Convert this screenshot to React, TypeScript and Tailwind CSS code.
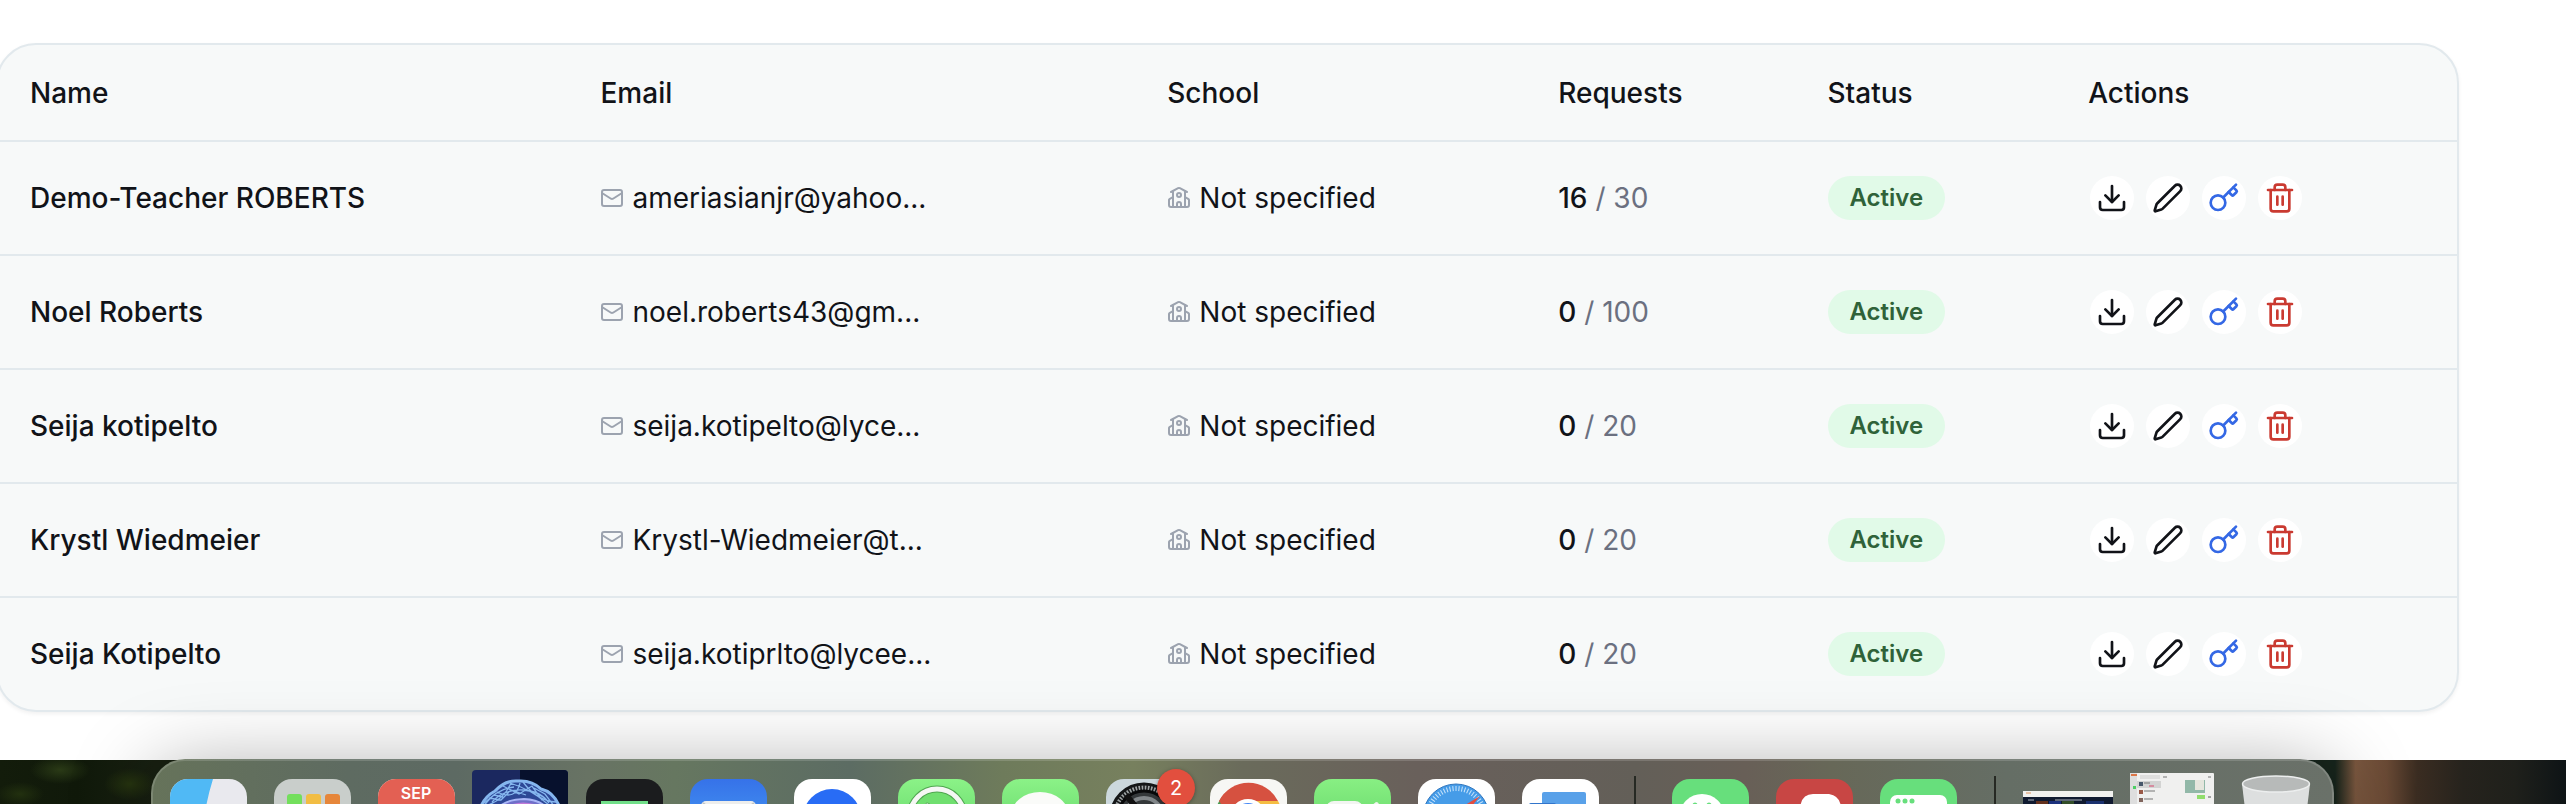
import React from "react";
import { Download, Key, Mail, Pen, School, Trash2 } from "lucide-react";

type Teacher = { name: string; email: string; used: number; limit: number };

const teachers: Teacher[] = [
  { name: "Demo-Teacher ROBERTS", email: "ameriasianjr@yahoo...", used: 16, limit: 30 },
  { name: "Noel Roberts", email: "noel.roberts43@gm...", used: 0, limit: 100 },
  { name: "Seija kotipelto", email: "seija.kotipelto@lyce...", used: 0, limit: 20 },
  { name: "Krystl Wiedmeier", email: "Krystl-Wiedmeier@t...", used: 0, limit: 20 },
  { name: "Seija Kotipelto", email: "seija.kotiprlto@lycee...", used: 0, limit: 20 },
];

const columns = ["Name", "Email", "School", "Requests", "Status", "Actions"];

function ActionButton({ label, className, children }: { label: string; className: string; children: React.ReactNode }) {
  return (
    <button type="button" aria-label={label} className={`flex size-11 items-center justify-center rounded-full bg-white ${className}`}>
      {children}
    </button>
  );
}

function TeacherRow({ teacher }: { teacher: Teacher }) {
  return (
    <tr className="h-[114px] border-b-2 border-[#e2e9ed] last:h-[113px] last:border-0">
      <td className="px-8 font-medium">{teacher.name}</td>
      <td className="px-8">
        <div className="flex items-center gap-2">
          <Mail className="size-6 text-[#9ca3af]" />
          <span>{teacher.email}</span>
        </div>
      </td>
      <td className="px-8">
        <div className="flex items-center gap-2">
          <School className="size-6 text-[#9ca3af]" />
          <span>Not specified</span>
        </div>
      </td>
      <td className="px-8">
        <span className="font-medium">{teacher.used}</span>
        <span className="text-[#6b7080]"> / {teacher.limit}</span>
      </td>
      <td className="px-8">
        <div className="flex">
          <span className="rounded-full border-2 border-transparent bg-[#e1fae8] px-5 py-1 text-2xl leading-8 font-semibold text-[#2f6239]">
            Active
          </span>
        </div>
      </td>
      <td className="px-8">
        <div className="flex gap-3 pl-[2px]">
          <ActionButton label={`Download ${teacher.name}`} className="text-[#111318]">
            <Download className="size-8" />
          </ActionButton>
          <ActionButton label={`Edit ${teacher.name}`} className="text-[#111318]">
            <Pen className="size-8" />
          </ActionButton>
          <ActionButton label={`Reset password of ${teacher.name}`} className="text-[#3468e5]">
            <Key className="size-8" />
          </ActionButton>
          <ActionButton label={`Delete ${teacher.name}`} className="text-[#ca3a31]">
            <Trash2 className="size-8" />
          </ActionButton>
        </div>
      </td>
    </tr>
  );
}

function Tile({ className, children }: { className: string; children?: React.ReactNode }) {
  return (
    <div className="flex w-[104px] shrink-0 justify-center pt-[18px]">
      <div className={`size-[77px] overflow-hidden rounded-[18px] ${className}`}>{children}</div>
    </div>
  );
}

function Art({ children }: { children: React.ReactNode }) {
  return (
    <svg viewBox="0 0 77 77" className="size-full" aria-hidden="true">
      {children}
    </svg>
  );
}

const ticks = Array.from({ length: 60 }, (_, i) => i * 6);

function Dock() {
  return (
    <nav
      aria-label="Dock"
      className="relative -mt-px ml-[151px] flex h-[120px] w-[2183px] shrink-0 rounded-[34px] border-2 border-white/15 bg-[linear-gradient(90deg,#66735a_0%,#5e6b61_9%,#5d6a63_14%,#687364_20%,#667760_24%,#5c6c63_32%,#6e7b5b_39%,#77805e_45%,#6a6b5b_50%,#69605b_58%,#635f58_68%,#685f57_73%,#676858_77%,#656e65_85%,#6a7169_100%)] bg-origin-border pl-[3px] shadow-[0_10px_80px_rgba(0,0,0,0.34)]"
    >
      <Tile className="bg-[#e9e9ee]">
        <Art>
          <path d="M0 0H43Q35 26 34 44H43V77H0Z" fill="#50b9f5" />
          <path d="M20 27v8M57 27v8" stroke="#20252b" strokeWidth="4" strokeLinecap="round" />
        </Art>
      </Tile>
      <Tile className="bg-[#c9cecb]">
        <Art>
          <rect x="13" y="15" width="15" height="15" rx="3" fill="#73df5c" />
          <rect x="32" y="15" width="15" height="15" rx="3" fill="#f2bd43" />
          <rect x="51" y="15" width="15" height="15" rx="3" fill="#e6863a" />
        </Art>
      </Tile>
      <Tile className="bg-[#f3f1ee]">
        <div className="h-[27px] bg-[#e36053] pt-1 text-center text-base leading-5 font-semibold text-white">SEP</div>
      </Tile>
      <div className="flex w-[104px] shrink-0 justify-center pt-[9px]">
        <svg viewBox="0 0 96 96" className="size-24 rounded-[4px]" aria-hidden="true">
          <rect width="96" height="96" fill="#1b285f" />
          <rect x="48" width="48" height="96" fill="#07112d" />
          <path d="M6 45Q8 29 21 22Q29 11 43 10Q56 9 66 17Q81 20 85 32Q93 38 91 60H5Z" fill="#2d4796" />
          <g fill="none" stroke="#85b6ee">
            <path d="M7 43Q10 28 23 21Q33 10 46 11Q60 10 69 19Q82 22 88 38" strokeWidth="3" />
            <path d="M10 39Q22 19 42 17M13 36Q31 31 39 13M25 22Q44 31 48 13M38 13Q61 20 79 37M51 12Q65 31 84 32M20 32Q32 19 51 20Q69 21 77 33M31 16L47 24L60 16L70 30M17 28L29 30L39 20L54 25M12 33L22 25L31 27M62 18L73 24L82 36" strokeWidth="1.3" />
          </g>
          <path d="M22 42Q32 29 52 29Q72 30 78 43Z" fill="#6f6fc9" stroke="#a9b6f7" strokeWidth="2" />
          <path d="M36 36Q48 30 62 34L66 40H34Z" fill="#c07ad8" />
        </svg>
      </div>
      <Tile className="bg-[#1b1c1e]">
        <Art>
          <rect x="15" y="22" width="47" height="30" fill="#71df89" />
        </Art>
      </Tile>
      <Tile className="bg-[linear-gradient(#3672e9,#4aa7f4)]">
        <Art>
          <rect x="11" y="22" width="55" height="36" rx="5" fill="#eeeeec" />
          <path d="M13 24L38 45L64 24" fill="none" stroke="#bfc4c6" strokeWidth="2" />
        </Art>
      </Tile>
      <Tile className="bg-white">
        <Art>
          <circle cx="38" cy="39" r="29" fill="#286cf5" />
        </Art>
      </Tile>
      <Tile className="bg-[linear-gradient(#8bf287,#58cf60)]">
        <Art>
          <circle cx="39" cy="37" r="27" fill="#70df6f" stroke="#50a650" strokeWidth="7" />
          <circle cx="39" cy="37" r="27" fill="none" stroke="#f5f7f4" strokeWidth="5" />
          <path d="M26 28Q27 22 32 25L34 32" fill="#fff" stroke="#58aa58" />
        </Art>
      </Tile>
      <Tile className="bg-[linear-gradient(#8bf287,#58cf60)]">
        <Art>
          <ellipse cx="38" cy="37" rx="29" ry="24" fill="#fafbf9" />
        </Art>
      </Tile>
      <div className="relative w-[104px] shrink-0 pt-[18px]">
        <div className="mx-auto size-[77px] overflow-hidden rounded-[18px] bg-[#ccd8dd]">
          <Art>
            <circle cx="38" cy="38" r="33" fill="#a1a6a7" stroke="#141617" strokeWidth="3" />
            <g stroke="#17191a" strokeWidth="1.5">
              {ticks.map((a) => (
                <path key={a} d="M38 6V12" transform={`rotate(${a} 38 38)`} />
              ))}
            </g>
            <circle cx="38" cy="38" r="26" fill="#34383a" stroke="#08090a" strokeWidth="3" />
            <circle cx="38" cy="38" r="19" fill="none" stroke="#82878a" strokeWidth="4" />
            <path d="M38 38L20 16M38 38L65 27" stroke="#111" strokeWidth="6" />
          </Art>
        </div>
        <span className="absolute top-[8px] left-[65px] flex size-[38px] items-center justify-center rounded-full bg-[#e24f3e] text-xl text-white shadow-[0_1px_4px_rgba(0,0,0,0.35)]">2</span>
      </div>
      <Tile className="bg-[#f7f7f4]">
        <Art>
          <circle cx="38" cy="38" r="33" fill="#4a9c51" />
          <path d="M9 22A33 33 0 0 1 68 22V38H20Z" fill="#d65140" />
          <path d="M38 22H68A33 33 0 0 1 60 64Z" fill="#f5bd42" />
          <circle cx="38" cy="38" r="16" fill="#4386f5" stroke="#fff" strokeWidth="4" />
        </Art>
      </Tile>
      <Tile className="bg-[linear-gradient(#88ef83,#58cf60)]">
        <Art>
          <rect x="12" y="22" width="37" height="34" rx="8" fill="#f2f5f1" />
          <path d="M52 31L62 23Q65 23 65 26V52L52 44Z" fill="#f2f5f1" />
        </Art>
      </Tile>
      <Tile className="bg-white">
        <Art>
          <circle cx="38" cy="38" r="33" fill="#469ce8" stroke="#3276bd" />
          <g stroke="#c9e4fb" strokeWidth="1">
            {ticks.map((a) => (
              <path key={a} d="M38 7V12" transform={`rotate(${a} 38 38)`} />
            ))}
          </g>
          <path d="M62 17L34 34L42 42Z" fill="#e34c40" />
          <path d="M14 59L34 34L42 42Z" fill="#eee" />
        </Art>
      </Tile>
      <Tile className="bg-white">
        <Art>
          <rect x="20" y="13" width="44" height="30" rx="2" fill="#59a1e9" />
          <rect x="7" y="24" width="27" height="34" rx="2" fill="#3275cb" />
        </Art>
      </Tile>
      <div className="mt-[15px] ml-[22px] h-24 w-[2px] shrink-0 bg-[#262923]" />
      <div className="w-[22px] shrink-0" />
      <Tile className="bg-[#67df7c]">
        <Art>
          <ellipse cx="30" cy="36" rx="22" ry="21" fill="#fff" />
          <circle cx="23" cy="26" r="2.5" fill="#67df7c" />
          <circle cx="37" cy="26" r="2.5" fill="#67df7c" />
        </Art>
      </Tile>
      <Tile className="bg-[#c84644]">
        <Art>
          <path d="M24 40V30Q25 15 37 15H53Q65 17 65 30V50H24Z" fill="#fff" />
        </Art>
      </Tile>
      <Tile className="bg-[#67df7c]">
        <Art>
          <rect x="10" y="16" width="57" height="46" rx="7" fill="#fff" />
          <g fill="#67df7c">
            <circle cx="18" cy="22" r="2.5" />
            <circle cx="25" cy="22" r="2.5" />
            <circle cx="32" cy="22" r="2.5" />
          </g>
        </Art>
      </Tile>
      <div className="mt-[15px] ml-6 h-24 w-[2px] shrink-0 bg-[#262923]" />
      <svg viewBox="0 0 90 60" className="mt-[30px] ml-[27px] h-[60px] w-[90px] shrink-0" aria-hidden="true">
        <rect width="90" height="60" rx="1" fill="#101a30" />
        <rect width="90" height="6" fill="#f1f1ef" />
        <path d="M3 2h5" stroke="#df9461" />
        <path d="M5 9h6M32 9h27" stroke="#acb3bd" />
        <rect x="13" y="10" width="12" height="8" fill="#64321e" />
        <rect x="26" y="10" width="12" height="8" fill="#1b317c" />
        <rect x="39" y="10" width="12" height="8" fill="#334e29" />
        <rect x="63" y="10" width="18" height="8" fill="#1b316f" />
      </svg>
      <svg viewBox="0 0 84 60" className="mt-[12px] ml-[17px] h-[60px] w-[84px] shrink-0" aria-hidden="true">
        <rect width="84" height="60" rx="1" fill="#f0f0ef" />
        <rect width="7" height="60" fill="#dedede" />
        <path d="M1 2h6" stroke="#db7748" strokeWidth="2" />
        <rect x="10" y="2" width="20" height="4" fill="#dededd" />
        <rect x="7" y="8" width="24" height="7" fill="#d3d4d3" />
        <rect x="9" y="9" width="4" height="4" fill="#46576a" />
        <path d="M14 10h6M14 18h11M14 26h9M33 4h4M78 4h3" stroke="#777" />
        <path d="M19 13h5" stroke="#d8476d" />
        <rect x="9" y="17" width="4" height="4" fill="#9a5947" />
        <rect x="9" y="25" width="4" height="4" fill="#80655d" />
        <rect x="3" y="13" width="3" height="3" fill="#4ece65" />
        <rect x="55" y="7" width="20" height="13" fill="#92b8a8" />
        <rect x="65" y="7" width="9" height="10" fill="#e5e6dd" />
        <rect x="67" y="22" width="8" height="4" fill="#91de6d" />
        <path d="M78 24h3" stroke="#555" />
      </svg>
      <svg viewBox="0 0 70 80" className="mt-[14px] ml-[27px] h-20 w-[70px] shrink-0" aria-hidden="true">
        <path d="M1 9L9 75Q35 84 61 75L69 9Z" fill="#dddfdf" />
        <ellipse cx="35" cy="9" rx="33.5" ry="8" fill="#b7bab9" stroke="#eceeee" strokeWidth="1.5" />
      </svg>
    </nav>
  );
}

export default function App() {
  return (
    <div className="flex h-screen flex-col overflow-hidden bg-white font-['Inter','Liberation_Sans',sans-serif] text-[28px] leading-10 text-[#111318]">
      <main className="-ml-1 pt-[43px] pr-[107px] pb-12">
        <div className="overflow-hidden rounded-[40px] border-2 border-[#e2e9ed] bg-[#f7f9f9] shadow-[0_2px_4px_rgba(0,0,0,0.06)]">
          <table className="w-full table-fixed border-collapse text-left">
            <colgroup>
              <col className="w-[23.2%]" />
              <col className="w-[23.05%]" />
              <col className="w-[15.9%]" />
              <col className="w-[10.95%]" />
              <col className="w-[10.6%]" />
              <col />
            </colgroup>
            <thead>
              <tr className="h-24 border-b-2 border-[#e2e9ed]">
                {columns.map((column) => (
                  <th key={column} scope="col" className="px-8 font-medium">
                    {column}
                  </th>
                ))}
              </tr>
            </thead>
            <tbody>
              {teachers.map((teacher) => (
                <TeacherRow key={teacher.email} teacher={teacher} />
              ))}
            </tbody>
          </table>
        </div>
      </main>
      <footer className="min-h-0 flex-1 bg-[radial-gradient(30px_14px_at_60px_10px,#2a3a16,transparent),radial-gradient(26px_16px_at_130px_24px,#26340f,transparent),radial-gradient(24px_12px_at_20px_34px,#22300f,transparent),linear-gradient(90deg,#131c0b_0%,#10190a_3%,#182011_6%,#17251c_91%,#7a573f_91.8%,#6a4a35_93%,#3a2c21_94.2%,#26231d_96%,#1f201b_98%,#0e1416_100%)]">
        <Dock />
      </footer>
    </div>
  );
}
